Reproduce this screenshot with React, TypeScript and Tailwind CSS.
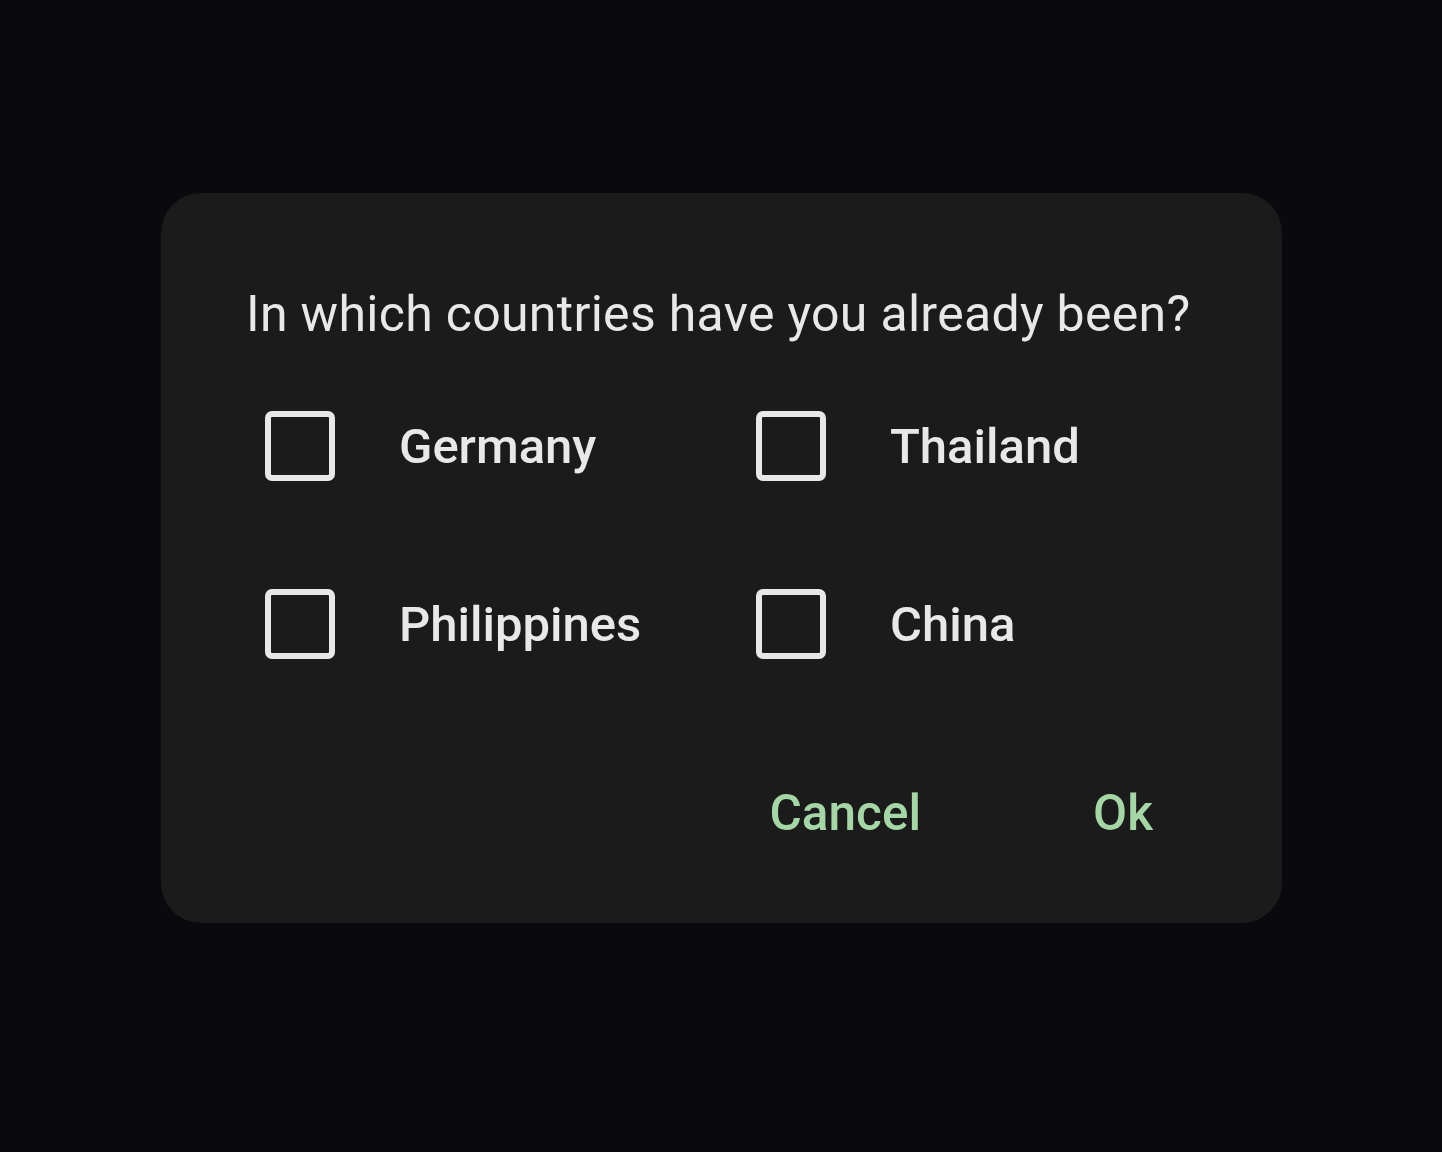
import React from "react";

const Box = () => (
  <div className="w-[70px] h-[70px] rounded-[7px] border-[6px] border-[#e8e8e8] shrink-0" />
);

const Item = ({ label }: { label: string }) => (
  <div className="flex items-center h-[70px] w-[491px]">
    <Box />
    <span className="ml-[64px] text-[49px] font-medium text-[#e8e8e8] leading-none">{label}</span>
  </div>
);

export default function App() {
  return (
    <div
      className="w-[1442px] h-[1152px] bg-[#0a0a0e] flex flex-col items-start"
      style={{ fontFamily: "Roboto, 'Noto Sans', sans-serif" }}
    >
      <div className="mt-[193px] ml-[161px] w-[1121px] h-[730px] rounded-[40px] bg-[#1b1b1b] flex flex-col">
        <div className="mt-[96px] ml-[85px] text-[50px] leading-none text-[#e8e8e8] tracking-[0.3px] whitespace-nowrap">
          In which countries have you already been?
        </div>
        <div className="mt-[72px] ml-[104px] grid grid-cols-[491px_491px] gap-y-[108px]">
          <Item label="Germany" />
          <Item label="Thailand" />
          <Item label="Philippines" />
          <Item label="China" />
        </div>
        <div className="mt-[130px] flex justify-end pr-[129px] gap-[172px] text-[49.5px] font-medium text-[#a5d6a5] leading-none">
          <span>Cancel</span>
          <span>Ok</span>
        </div>
      </div>
    </div>
  );
}
